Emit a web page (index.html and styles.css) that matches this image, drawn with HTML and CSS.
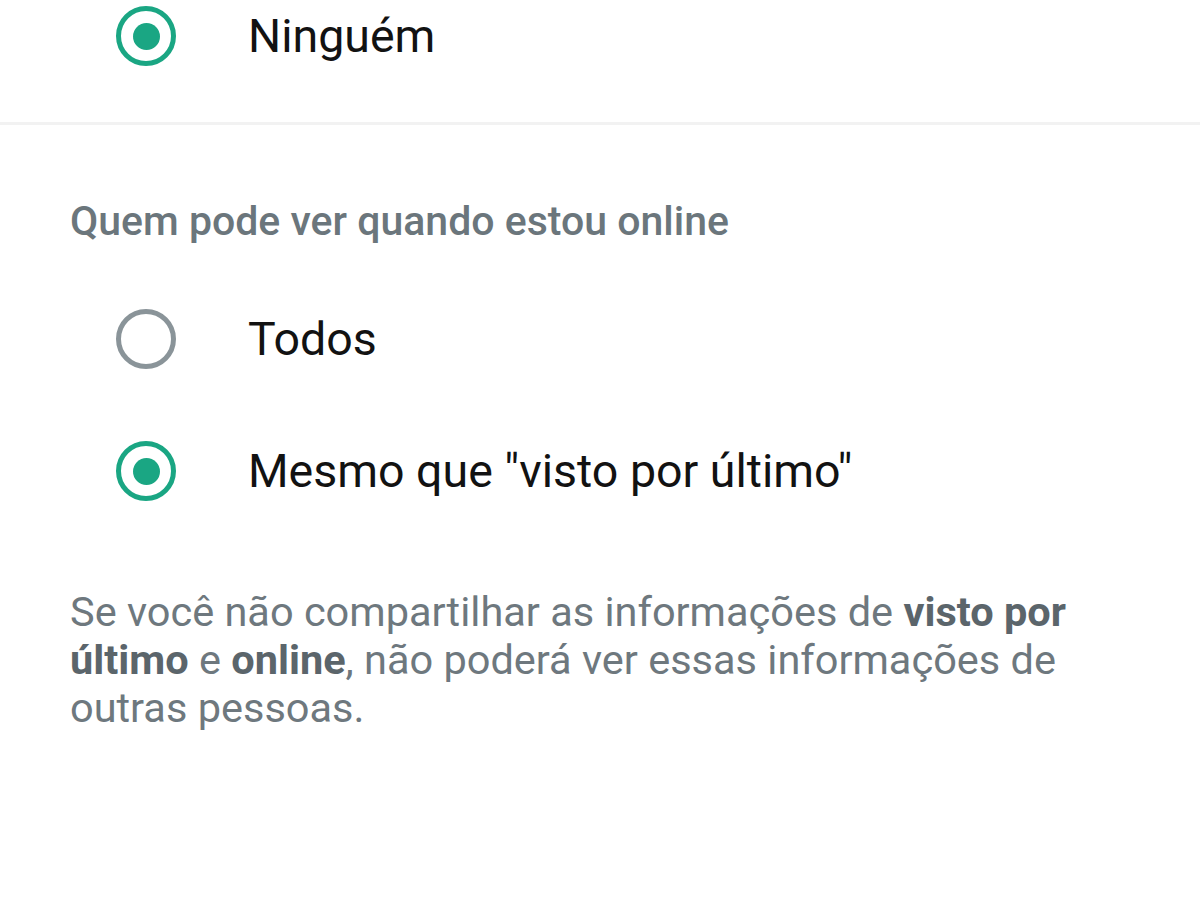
FILE: index.html
```html
<!DOCTYPE html>
<html lang="pt-BR">
<head>
  <meta charset="UTF-8" />
  <title>Privacidade</title>
  <link rel="stylesheet" href="styles.css">
</head>
<body>
  <div class="section first">
    <label class="option">
      <span class="radio checked"></span>
      <span class="option-label">Ninguém</span>
    </label>
  </div>

  <div class="section">
    <div class="section-title">Quem pode ver quando estou online</div>

    <label class="option">
      <span class="radio"></span>
      <span class="option-label">Todos</span>
    </label>
    <label class="option">
      <span class="radio checked"></span>
      <span class="option-label">Mesmo que "visto por último"</span>
    </label>

    <p class="note">
      Se você não compartilhar as informações de <b>visto por último</b> e <b>online</b>, não poderá ver essas informações de outras pessoas.
    </p>
  </div>
</body>
</html>
```

FILE: styles.css
```css
* {
  margin: 0;
  padding: 0;
  box-sizing: border-box;
}

body {
  background: #fff;
  font-family: Roboto, "Noto Sans", sans-serif;
  color: #111b21;
}

.section {
  padding: 0 70px;
}

.section.first {
  padding-bottom: 50px;
  border-bottom: 3px solid #f2f2f2;
}

.option {
  display: flex;
  align-items: center;
  height: 132px;
  padding-left: 46px;
}

.section.first .option {
  height: 72px;
}

.radio {
  width: 60px;
  height: 60px;
  border-radius: 50%;
  border: 5px solid #8a9499;
  display: flex;
  align-items: center;
  justify-content: center;
  flex-shrink: 0;
}

.radio.checked {
  border-color: #1aa683;
}

.radio.checked::after {
  content: "";
  width: 27px;
  height: 27px;
  border-radius: 50%;
  background: #1aa683;
}

.option-label {
  margin-left: 72px;
  font-size: 46.5px;
  color: #121212;
}

.section-title {
  margin-top: 72px;
  margin-bottom: 28px;
  font-size: 41px;
  line-height: 48px;
  font-weight: 500;
  color: #6b767c;
}

.note {
  margin-top: 51px;
  max-width: 1010px;
  font-size: 41.5px;
  line-height: 48px;
  color: #6e787e;
}

.note b {
  font-weight: 700;
  color: #5b656b;
}
```
